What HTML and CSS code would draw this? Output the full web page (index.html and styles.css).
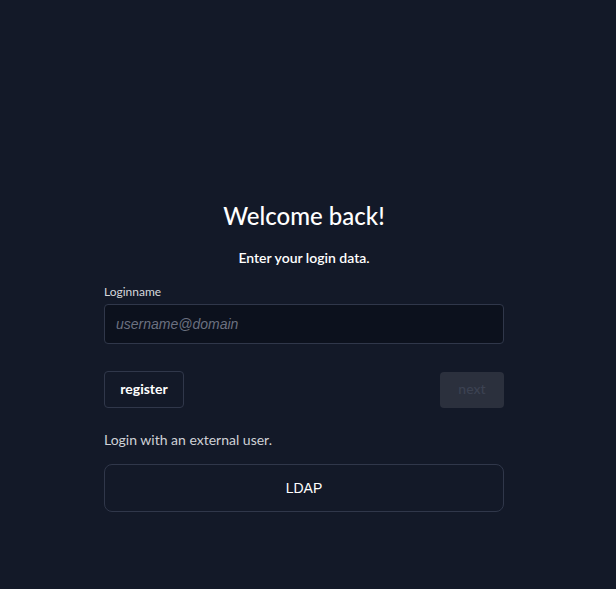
FILE: index.html
```html
<!DOCTYPE html>
<html>
<head>
<meta charset="utf-8">
<link rel="stylesheet" href="styles.css">
</head>
<body>
<main class="page">
  <div class="card">
    <h1 class="title">Welcome back!</h1>
    <p class="subtitle">Enter your login data.</p>
    <label class="label">Loginname</label>
    <div class="input"><span class="placeholder">username@domain</span></div>
    <div class="actions">
      <button class="btn btn-outline">register</button>
      <button class="btn btn-disabled">next</button>
    </div>
    <p class="external">Login with an external user.</p>
    <button class="btn-idp">LDAP</button>
  </div>
</main>
</body>
</html>
```
FILE: styles.css
```css
html, body {
  margin: 0;
  padding: 0;
  background: #131928;
  height: 100%;
}
body {
  font-family: Lato, "Noto Sans", sans-serif;
  color: #ffffff;
}
.page {
  display: flex;
  justify-content: center;
  padding-top: 200px;
  padding-right: 8px;
}
.card {
  width: 400px;
  display: flex;
  flex-direction: column;
}
.title {
  margin: 0;
  font-size: 24px;
  font-weight: 500;
  text-align: center;
  line-height: 32px;
}
.subtitle {
  margin: 16px 0 0;
  font-size: 14px;
  font-weight: 600;
  text-align: center;
  line-height: 20px;
}
.label {
  margin-top: 16px;
  font-size: 12px;
  line-height: 16px;
  color: #d5d7dc;
}
.input {
  margin-top: 4px;
  height: 38px;
  border: 1px solid #30374a;
  border-radius: 4px;
  background: #0c111d;
  display: flex;
  align-items: center;
  padding-left: 11px;
}
.placeholder {
  font-family: "Liberation Sans", Arial, sans-serif;
  font-style: italic;
  font-size: 14px;
  color: #6b7080;
}
.actions {
  margin-top: 27px;
  display: flex;
  justify-content: space-between;
  align-items: center;
}
.btn {
  font-family: Lato, sans-serif;
  font-size: 14px;
  font-weight: 700;
  border-radius: 4px;
  cursor: pointer;
  padding: 0 0 2px;
}
.btn-outline {
  width: 80px;
  height: 37px;
  background: transparent;
  border: 1px solid #30374a;
  color: #ffffff;
}
.btn-disabled {
  width: 64px;
  height: 36px;
  background: #2b303d;
  border: none;
  color: #3c4252;
  font-weight: 500;
}
.external {
  margin: 23px 0 0;
  font-size: 14px;
  line-height: 18px;
  color: #cfd1d6;
}
.btn-idp {
  margin-top: 15px;
  height: 48px;
  border: 1px solid #30374a;
  border-radius: 8px;
  background: transparent;
  color: #ffffff;
  font-family: "Liberation Sans", Arial, sans-serif;
  font-size: 14px;
  font-weight: 500;
}
```
